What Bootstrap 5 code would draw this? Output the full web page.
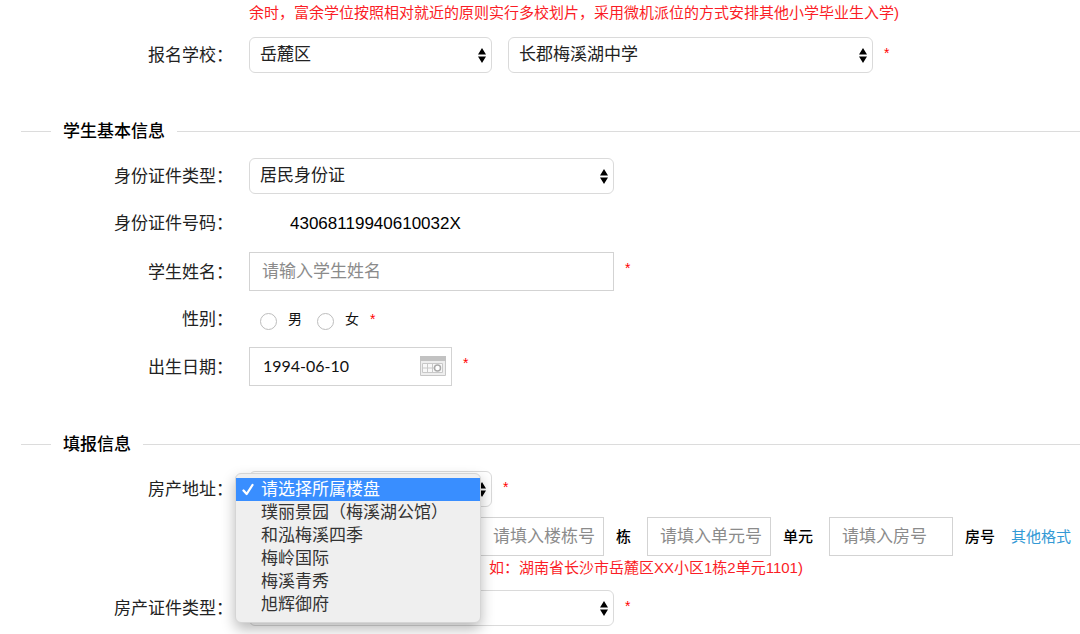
<!DOCTYPE html>
<html lang="zh-CN">
<head>
<meta charset="utf-8">
<meta name="viewport" content="width=device-width, initial-scale=1">
<title>学生报名信息</title>
<link href="https://cdn.jsdelivr.net/npm/bootstrap@5.3.0/dist/css/bootstrap.min.css" rel="stylesheet">
<style>
body{font-family:"Liberation Sans","Noto Sans CJK SC",sans-serif;font-size:17px;line-height:24px;color:#111;background:#fff}
.form-line{display:flex;align-items:center;gap:16px;margin-bottom:9px}
.line-label{flex:0 0 233px;text-align:right;color:#222;padding-top:2px}
.tall{min-height:40px}
.medium{min-height:38px}
.hint{font-size:15px;line-height:22px;color:#fb1d26}
.top-hint{margin:2px 0 13px 249px}
.addr-hint{margin:0 0 11px 489px}
.req{font-size:14px;line-height:24px;color:#f00;align-self:flex-start;margin:4px 0 0 11px}
.section-title{display:flex;align-items:center;margin:46px 0 15px 21px;gap:12px}
.section-title h2{font-size:17px;line-height:24px;font-weight:500;margin:0;padding-top:2px;color:#000}
.section-title{height:24px}
.section-title::before{content:"";width:30px;height:1px;background:#dcdcdc}
.section-title::after{content:"";flex:1;height:1px;background:#dcdcdc}
.pick.form-select{height:36px;padding:0 24px 0 10px;font-size:17px;line-height:24px;color:#222;border:1px solid #dadada;border-radius:6px;
background:#fff url("data:image/svg+xml,%3Csvg xmlns='http://www.w3.org/2000/svg' viewBox='0 0 8 15'%3E%3Cpath d='M4 0L8 6.5H0zM0 8.5H8L4 15z'/%3E%3C/svg%3E") no-repeat right 5px center/8px 15px}
.w-area{width:243px}
.w-wide{width:365px}
.w-unit{width:124px}
.entry.form-control{height:39px;padding:0 4px 0 12px;font-size:17px;line-height:24px;border:1px solid #d3d3d3;border-radius:0;color:#111}
.entry.form-control::placeholder{color:#8b8b8b;opacity:1}
.date-box{width:203px;height:39px;border:1px solid #d3d3d3;padding:0 5px 2px 13px}
.date-box input{min-width:0;flex:1;border:0;padding:0;font:16px/24px Lato,sans-serif;color:#111}
.id-number{padding:2px 0 0 41px;color:#000}
.sex{font-size:14px;padding-left:11px;gap:11px}
.sex .form-check-input{width:17px;height:17px;margin:4px 0 0;border:1px solid #bdbdbd}
.sex label + .form-check-input{margin-left:4px}
.addr-line{display:flex;align-items:center;margin:10px 0 1px 480px;font-size:15px;white-space:nowrap}
.unit{font-weight:500;color:#000;margin:0 16px 0 12px}
.addr-line a{color:#3399d5;text-decoration:none}
.mac-menu.dropdown-menu{top:2px;left:-14px;width:246px;min-width:0;padding:4px 0 6px;background:#efefef;border:1px solid #d5d5d5;border-radius:6px;box-shadow:0 6px 14px rgba(0,0,0,.28);font-size:17px}
.mac-menu .dropdown-item{height:23px;line-height:23px;padding:0 5px 0 6px;color:#333;display:flex;align-items:center;gap:7px}
.mac-menu .dropdown-item.active{background:#398eff;color:#fff}
.tick{width:12px;height:13px;flex:none}
</style>
</head>
<body>
<form class="overflow-hidden min-vh-100">
  <p class="hint top-hint">余时，富余学位按照相对就近的原则实行多校划片，采用微机派位的方式安排其他小学毕业生入学)</p>
  <div class="form-line">
    <label class="line-label" for="district">报名学校：</label>
    <select id="district" class="form-select pick w-area"><option>岳麓区</option></select>
    <div class="d-flex">
      <select class="form-select pick w-wide" aria-label="学校"><option>长郡梅溪湖中学</option></select>
      <span class="req">*</span>
    </div>
  </div>

  <div class="section-title"><h2>学生基本信息</h2></div>
  <div class="form-line">
    <label class="line-label" for="idtype">身份证件类型：</label>
    <select id="idtype" class="form-select pick w-wide"><option>居民身份证</option></select>
  </div>
  <div class="form-line tall">
    <span class="line-label">身份证件号码：</span>
    <span class="id-number">43068119940610032X</span>
  </div>
  <div class="form-line">
    <label class="line-label" for="name">学生姓名：</label>
    <div class="d-flex">
      <input id="name" type="text" class="form-control entry w-wide" placeholder="请输入学生姓名">
      <span class="req">*</span>
    </div>
  </div>
  <div class="form-line medium">
    <span class="line-label">性别：</span>
    <div class="sex d-flex align-items-center">
      <input class="form-check-input" type="radio" name="sex" id="male"><label for="male">男</label>
      <input class="form-check-input" type="radio" name="sex" id="female"><label for="female">女</label>
      <span class="req m-0">*</span>
    </div>
  </div>
  <div class="form-line">
    <label class="line-label" for="birth">出生日期：</label>
    <div class="d-flex">
      <div class="date-box d-flex align-items-center">
        <input id="birth" type="text" value="1994-06-10">
        <svg width="26" height="20" viewBox="0 0 26 20" fill="none" aria-hidden="true">
          <path d="M.5 .5h25v19H.5z" fill="#eee" stroke="#c6c6c6"/><path d="M0 0h26v5H0z" fill="#c2c2c2"/>
          <path d="M2.500 7.500h20v9h-20z" stroke="#c8c8c8" fill="#f8f8f8"/>
          <path d="M2.500 12h12M7.500 7v10M12.500 7v10" stroke="#c8c8c8"/>
          <circle cx="17.500" cy="12" r="3" fill="#fff" stroke="#aaa" stroke-width="1.500"/>
        </svg>
      </div>
      <span class="req">*</span>
    </div>
  </div>

  <div class="section-title"><h2>填报信息</h2></div>
  <div class="form-line">
    <label class="line-label" for="estate">房产地址：</label>
    <div class="d-flex position-relative">
      <select id="estate" class="form-select pick w-area"><option>请选择所属楼盘</option></select>
      <span class="req">*</span>
      <div class="dropdown-menu show mac-menu">
        <button type="button" class="dropdown-item active"><svg class="tick" viewBox="0 0 12 13" aria-hidden="true"><path d="M1.500 7.500L4.700 11 10.500 2" fill="none" stroke="#fff" stroke-width="2.300" stroke-linecap="round" stroke-linejoin="round"/></svg>请选择所属楼盘</button>
        <button type="button" class="dropdown-item"><span class="tick"></span>璞丽景园（梅溪湖公馆）</button>
        <button type="button" class="dropdown-item"><span class="tick"></span>和泓梅溪四季</button>
        <button type="button" class="dropdown-item"><span class="tick"></span>梅岭国际</button>
        <button type="button" class="dropdown-item"><span class="tick"></span>梅溪青秀</button>
        <button type="button" class="dropdown-item"><span class="tick"></span>旭辉御府</button>
      </div>
    </div>
  </div>
  <div class="addr-line">
    <input id="building" type="text" class="form-control entry w-unit" placeholder="请填入楼栋号"><label class="unit" for="building">栋</label>
    <input id="unit" type="text" class="form-control entry w-unit" placeholder="请填入单元号"><label class="unit" for="unit">单元</label>
    <input id="room" type="text" class="form-control entry w-unit" placeholder="请填入房号"><label class="unit" for="room">房号</label>
    <a href="#">其他格式</a>
  </div>
  <p class="hint addr-hint">如：湖南省长沙市岳麓区XX小区1栋2单元1101)</p>
  <div class="form-line mb-0">
    <label class="line-label" for="cert">房产证件类型：</label>
    <div class="d-flex">
      <select id="cert" class="form-select pick w-wide"><option></option></select>
      <span class="req">*</span>
    </div>
  </div>
</form>
<script src="https://cdn.jsdelivr.net/npm/bootstrap@5.3.0/dist/js/bootstrap.bundle.min.js"></script>
</body>
</html>
